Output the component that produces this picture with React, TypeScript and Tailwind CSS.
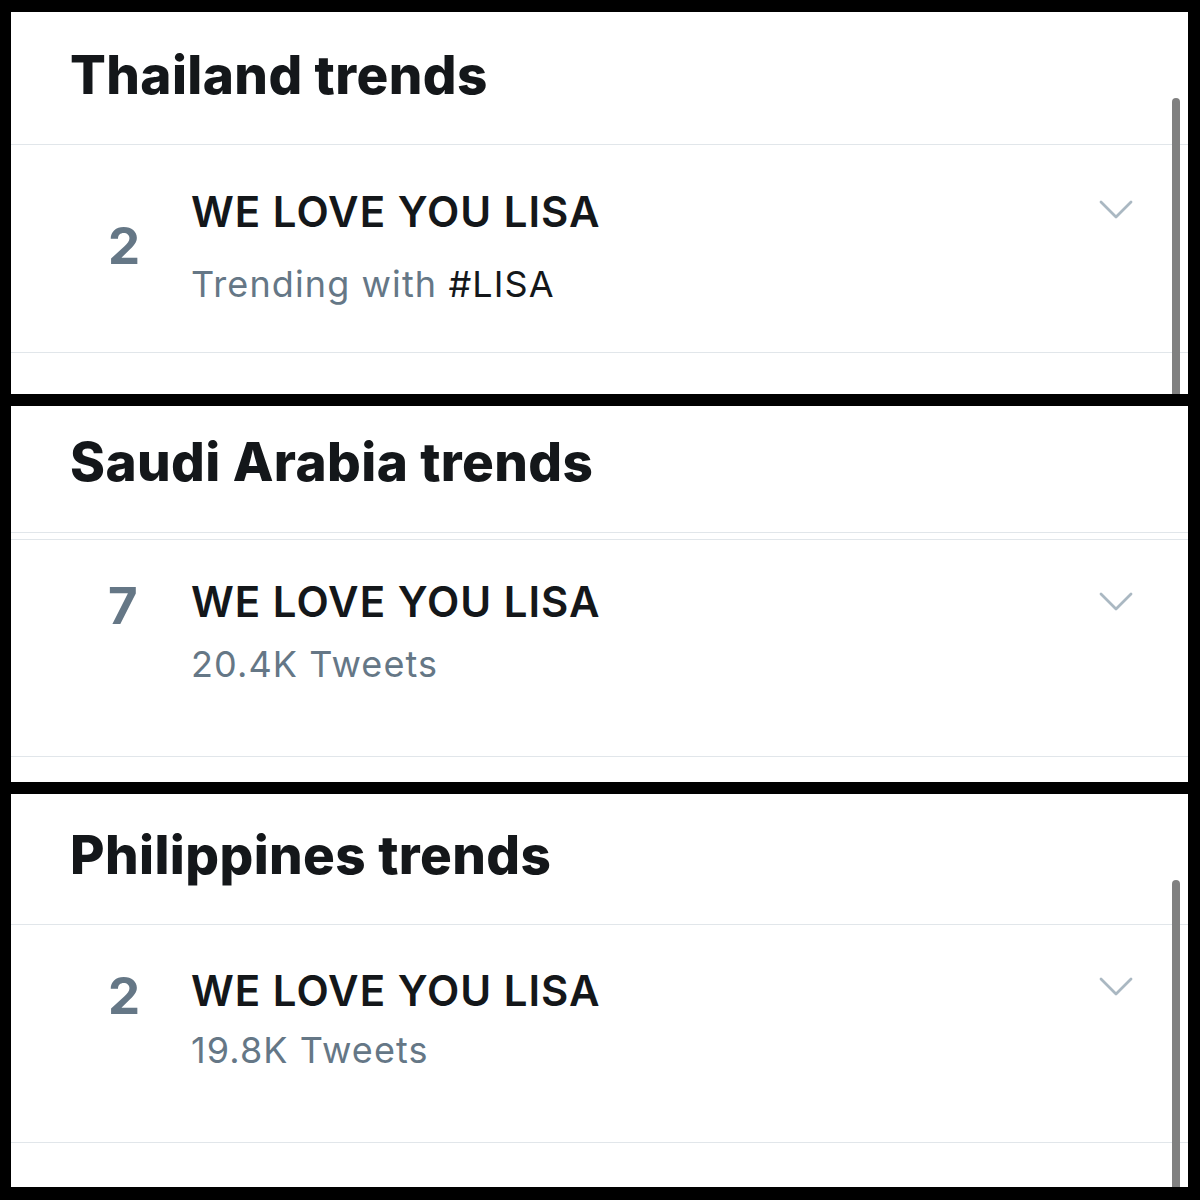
import React from 'react';

type Trend = {
  title: string;
  rank: string;
  meta: React.ReactNode;
  // per-panel offsets, the three screenshots were cropped differently
  headingBox: string;
  headingPad: string;
  rowBox: string;
  rankTop: string;
  titleTop: string;
  chevronTop: string;
  metaTop: string;
  panelHeight: string;
  doubleRule?: boolean;
  scrollbar?: boolean;
};

const Chevron: React.FC = () => (
  <svg width="34" height="20" viewBox="0 0 34 20" fill="none">
    <polyline points="2,2 17,17 32,2" stroke="#aab8c2" strokeWidth="2.8" strokeLinecap="round" strokeLinejoin="round" />
  </svg>
);

const TrendPanel: React.FC<{ heading: string; trend: Trend }> = ({ heading, trend }) => {
  return (
    <div className={`relative flex flex-col bg-white ${trend.panelHeight}`}>
      {/* Header */}
      <div className={`border-b border-[#e1e6ea] pl-[59px] ${trend.headingBox} ${trend.headingPad}`}>
        <h2 className="text-[53px] leading-none font-extrabold tracking-[0.4px] text-[#14171a]">{heading}</h2>
      </div>
      {trend.doubleRule && <div className="h-[7px] border-b border-[#e1e6ea]" />}

      {/* Trend row */}
      <div className={`flex items-start border-b border-[#e1e6ea] ${trend.rowBox}`}>
        <div className={`ml-[97px] w-[83px] text-[51px] leading-none font-bold text-[#657786] ${trend.rankTop}`}>
          {trend.rank}
        </div>
        <div className={`flex-1 ${trend.titleTop}`}>
          <p className="text-[42px] leading-none font-semibold tracking-[1px] text-[#14171a]">{trend.title}</p>
          <p className={`text-[36px] leading-none tracking-[1.1px] text-[#657786] ${trend.metaTop}`}>{trend.meta}</p>
        </div>
        <div className={`mr-[55px] ${trend.chevronTop}`}>
          <Chevron />
        </div>
      </div>
      <div className="flex-1" />

      {trend.scrollbar && (
        <div className="absolute right-[8px] top-[86px] bottom-0 w-[8px] rounded-t-full bg-[#808080]" />
      )}
    </div>
  );
};

const panels: { heading: string; trend: Trend }[] = [
  {
    heading: 'Thailand trends',
    trend: {
      title: 'WE LOVE YOU LISA',
      rank: '2',
      meta: (
        <>
          Trending with <span className="text-[#14171a]">#LISA</span>
        </>
      ),
      panelHeight: 'h-[382px]',
      headingBox: 'h-[133px]',
      headingPad: 'pt-[37px]',
      rowBox: 'h-[208px]',
      rankTop: 'mt-[75px]',
      titleTop: 'mt-[46px]',
      chevronTop: 'mt-[55px]',
      metaTop: 'mt-[33px]',
      scrollbar: true,
    },
  },
  {
    heading: 'Saudi Arabia trends',
    trend: {
      title: 'WE LOVE YOU LISA',
      rank: '7',
      meta: '20.4K Tweets',
      panelHeight: 'h-[376px]',
      headingBox: 'h-[127px]',
      headingPad: 'pt-[30px]',
      rowBox: 'h-[217px]',
      rankTop: 'mt-[40px]',
      titleTop: 'mt-[41px]',
      chevronTop: 'mt-[52px]',
      metaTop: 'mt-[23px]',
      doubleRule: true,
    },
  },
  {
    heading: 'Philippines trends',
    trend: {
      title: 'WE LOVE YOU LISA',
      rank: '2',
      meta: '19.8K Tweets',
      panelHeight: 'h-[393px]',
      headingBox: 'h-[131px]',
      headingPad: 'pt-[35px]',
      rowBox: 'h-[218px]',
      rankTop: 'mt-[45px]',
      titleTop: 'mt-[45px]',
      chevronTop: 'mt-[52px]',
      metaTop: 'mt-[20px]',
      scrollbar: true,
    },
  },
];

const App: React.FC = () => {
  return (
    <div className="w-[1200px] h-[1200px] bg-black pt-[12px] pl-[11px] pr-[12px] pb-[13px] flex flex-col gap-[12px] font-['Inter',sans-serif] overflow-hidden">
      {panels.map((p) => (
        <TrendPanel key={p.heading} heading={p.heading} trend={p.trend} />
      ))}
    </div>
  );
};

export default App;
